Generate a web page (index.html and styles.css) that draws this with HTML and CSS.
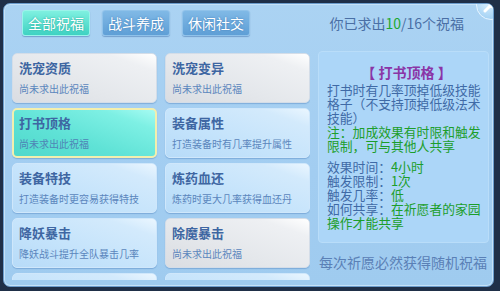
FILE: index.html
```html
<!DOCTYPE html>
<html lang="zh">
<head>
<meta charset="utf-8">
<link rel="stylesheet" href="styles.css">
</head>
<body>
<div class="panel">
  <div class="header">
    <div class="tabs">
      <div class="tab active">全部祝福</div>
      <div class="tab">战斗养成</div>
      <div class="tab">休闲社交</div>
    </div>
    <div class="counter">你已求出<span class="num">10</span>/16个祝福</div>
  </div>
  <div class="body">
    <div class="grid">
      <div class="card grey"><div class="ctitle">洗宠资质</div><div class="csub">尚未求出此祝福</div></div>
      <div class="card grey"><div class="ctitle">洗宠变异</div><div class="csub">尚未求出此祝福</div></div>
      <div class="card sel"><div class="ctitle">打书顶格</div><div class="csub">尚未求出此祝福</div></div>
      <div class="card blue"><div class="ctitle">装备属性</div><div class="csub">打造装备时有几率提升属性</div></div>
      <div class="card blue"><div class="ctitle">装备特技</div><div class="csub">打造装备时更容易获得特技</div></div>
      <div class="card blue"><div class="ctitle">炼药血还</div><div class="csub">炼药时更大几率获得血还丹</div></div>
      <div class="card blue"><div class="ctitle">降妖暴击</div><div class="csub">降妖战斗提升全队暴击几率</div></div>
      <div class="card grey"><div class="ctitle">除魔暴击</div><div class="csub">尚未求出此祝福</div></div>
      <div class="card blue"><div class="ctitle">&nbsp;</div><div class="csub">&nbsp;</div></div>
      <div class="card blue"><div class="ctitle">&nbsp;</div><div class="csub">&nbsp;</div></div>
    </div>
    <div class="side">
      <div class="detail">
        <div class="dtitle">【 打书顶格 】</div>
        <div class="dtext">打书时有几率顶掉低级技能格子（不支持顶掉低级法术技能）</div>
        <div class="dtext green">注：加成效果有时限和触发限制，可与其他人共享</div>
        <div class="stats">
          <div class="label">效果时间：</div><div class="val">4小时</div>
          <div class="label">触发限制：</div><div class="val">1次</div>
          <div class="label">触发几率：</div><div class="val">低</div>
          <div class="label">如何共享：</div><div class="val">在祈愿者的家园</div>
          <div class="val wide">操作才能共享</div>
        </div>
      </div>
      <div class="footnote">每次祈愿必然获得随机祝福</div>
    </div>
  </div>
  <div class="close">
    <svg width="28" height="28" viewBox="0 0 28 28"><path d="M8 8 L20 20 M20 8 L8 20" stroke="#ffffff" stroke-width="3" stroke-linecap="round" fill="none"/></svg>
  </div>
</div>
</body>
</html>
```

FILE: styles.css
```css
html, body {
  margin: 0;
  padding: 0;
}
body {
  width: 500px;
  height: 291px;
  overflow: hidden;
  background: #1f2f48;
  font-family: "Noto Sans CJK SC", "Noto Sans", sans-serif;
}
.panel {
  position: relative;
  box-sizing: border-box;
  margin: 3px 0 0 3px;
  width: 491px;
  height: 284px;
  border-radius: 7px;
  border: 1px solid #6b9ccc;
  background: linear-gradient(180deg, #abd3f3 0%, #a2cdf1 60%, #9fcbef 100%);
  box-shadow: inset 0 0 0 1px #c6e2f8;
  overflow: hidden;
}
.header {
  display: flex;
  align-items: center;
  padding: 6px 0 0 18px;
  height: 26px;
}
.tabs {
  display: flex;
  gap: 12px;
}
.tab {
  box-sizing: border-box;
  width: 68px;
  height: 26px;
  border-radius: 3px;
  font-size: 14px;
  line-height: 24px;
  text-align: center;
  color: #ffffff;
  background: linear-gradient(180deg, #80b9e6 0%, #5f9fd6 100%);
  border: 1px solid #8fc2ea;
  text-shadow: 0 0 2px #3c79b4;
  box-shadow: 0 1px 1px rgba(60, 110, 170, 0.5);
}
.tab.active {
  background: linear-gradient(180deg, #7ff0e0 0%, #3fd2c2 100%);
  border-color: #9af4ea;
  text-shadow: 0 0 2px #2aa596;
}
.counter {
  margin-left: auto;
  margin-right: 29px;
  font-size: 14px;
  color: #4a6fa5;
  line-height: 20px;
}
.counter .num {
  color: #1fa830;
}
.body {
  display: flex;
  gap: 8px;
  padding: 15px 0 0 8px;
}
.grid {
  margin-top: 2px;
  width: 298px;
  height: 227px;
  overflow: hidden;
  display: grid;
  grid-template-columns: 145px 145px;
  grid-auto-rows: 50px;
  column-gap: 8px;
  row-gap: 5px;
}
.card {
  box-sizing: border-box;
  border-radius: 5px;
  padding: 5px 0 0 6px;
  border: 1px solid #c4dcf2;
  box-shadow: 0 1px 1px rgba(80, 130, 190, 0.45);
}
.card.grey {
  background: linear-gradient(200deg, #ffffff 0%, #eef0f3 18%, #e4e7eb 60%, #dadde2 100%);
  border-color: #d4dde8;
}
.card.blue {
  background: linear-gradient(200deg, #eaf6ff 0%, #d3eafc 18%, #c4e3fb 60%, #b7dbf8 100%);
  border-color: #cfe7fb;
}
.card.sel {
  background: linear-gradient(200deg, #a6fbf2 0%, #7ef0e4 20%, #5fe2d6 60%, #4fd8cb 100%);
  border: 2px solid #f3efae;
  padding: 4px 0 0 5px;
}
.ctitle {
  font-size: 13px;
  font-weight: bold;
  line-height: 18px;
  color: #3e66a2;
}
.csub {
  margin-top: 5px;
  font-size: 10px;
  line-height: 14px;
  color: #5b86bd;
  white-space: nowrap;
}
.card.sel .csub {
  color: #4f84b6;
}
.side {
  display: flex;
  flex-direction: column;
  width: 171px;
}
.detail {
  box-sizing: border-box;
  height: 192px;
  border-radius: 4px;
  background: #acd6f8;
  border: 1px solid #b9ddf9;
  padding: 11px 2px 0 8px;
}
.dtitle {
  text-align: center;
  font-size: 14px;
  font-weight: bold;
  line-height: 18px;
  color: #8a35a6;
  margin-bottom: 2px;
}
.dtext {
  font-size: 12.8px;
  line-height: 14px;
  color: #3f6aa6;
}
.green {
  color: #1c9e2b;
}
.stats {
  margin-top: 7px;
  display: grid;
  grid-template-columns: max-content 1fr;
  grid-auto-rows: 14px;
  font-size: 12.8px;
  line-height: 14px;
}
.label {
  color: #3f6aa6;
}
.val {
  color: #1c9e2b;
  white-space: nowrap;
}
.val.wide {
  grid-column: 1 / 3;
}
.footnote {
  margin-top: 10px;
  padding-left: 1px;
  font-size: 14px;
  line-height: 18px;
  color: #5a80b6;
  white-space: nowrap;
}
.close {
  position: absolute;
  right: -13px;
  top: -14px;
  width: 28px;
  height: 28px;
  border-radius: 50%;
  background: radial-gradient(circle at 40% 40%, #d9efff 0%, #a5d2f4 70%, #86bfea 100%);
  border: 1px solid #e6f4ff;
}
.close svg {
  display: block;
}
```
